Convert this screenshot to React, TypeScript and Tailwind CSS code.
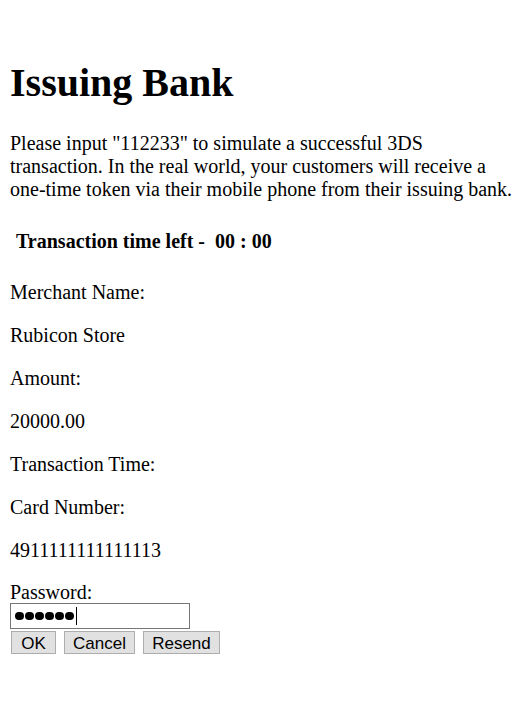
import React from 'react';

const fields: { label: string; value?: string }[] = [
    { label: 'Merchant Name:', value: 'Rubicon Store' },
    { label: 'Amount:', value: '20000.00' },
    { label: 'Transaction Time:' },
    { label: 'Card Number:', value: '4911111111111113' },
];

const App: React.FC = () => {
    const rows: string[] = [];
    fields.forEach((f) => {
        rows.push(f.label);
        if (f.value) rows.push(f.value);
    });

    return (
        <div className="min-h-[720px] bg-white px-[10px] pt-[60px] font-['Liberation_Serif',serif] text-[20px] leading-[23px] text-black">
            <h1 className="text-[40px] font-bold leading-[46px]">Issuing Bank</h1>

            <p className="mt-[26px]">
                Please input "112233" to simulate a successful 3DS transaction. In the real world, your customers will receive a one-time token via their mobile phone from their issuing bank.
            </p>

            <div className="mt-[29px] pl-[6px] font-bold">
                Transaction time left -&nbsp; 00 : 00
            </div>

            <div className="mt-[8px] flex flex-col">
                {rows.map((r) => (
                    <p key={r} className="mt-[20px]">{r}</p>
                ))}
            </div>

            <form className="mt-[19px]" onSubmit={(e) => e.preventDefault()}>
                <label className="block">Password:</label>
                <div className="-mt-px flex h-[26px] w-[180px] items-center gap-[1.5px] border border-[#767676] bg-white pl-[4px]">
                    {[0, 1, 2, 3, 4, 5].map((i) => (
                        <span key={i} className="h-[8.5px] w-[8.5px] rounded-full bg-black" />
                    ))}
                    <span className="ml-[1px] h-[18px] w-px bg-black" />
                </div>
                <div className="mt-[2px] flex gap-[8px] pl-px font-['Liberation_Sans',sans-serif] text-[17px] leading-[22px]">
                    <button type="submit" className="h-[23px] w-[45px] border border-[#adadad] bg-[#e1e1e1] pt-px">OK</button>
                    <button type="button" className="h-[23px] w-[71px] border border-[#adadad] bg-[#e1e1e1] pt-px">Cancel</button>
                    <button type="button" className="h-[23px] w-[77px] border border-[#adadad] bg-[#e1e1e1] pt-px">Resend</button>
                </div>
            </form>
        </div>
    );
};

export default App;
